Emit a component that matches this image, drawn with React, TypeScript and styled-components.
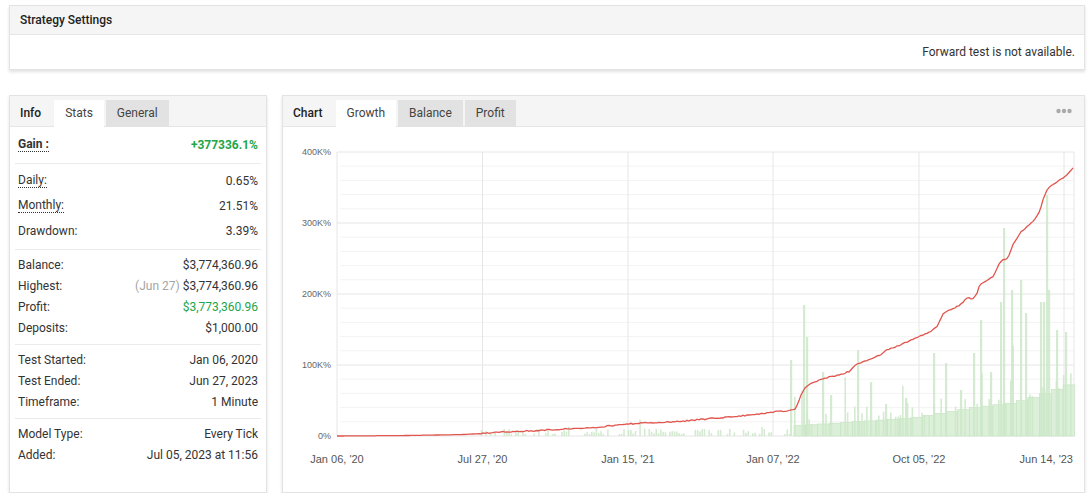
import React from 'react';
import styled, { createGlobalStyle } from 'styled-components';

const GlobalStyle = createGlobalStyle`
	* {
		box-sizing: border-box;
	}
	html,
	body {
		margin: 0;
		padding: 0;
		background: #fff;
	}
	body {
		font-family: Roboto, 'Liberation Sans', Arial, sans-serif;
		color: #333;
	}
`;

const Page = styled.div`
	width: 1090px;
	padding: 5px 5px 0 9px;
`;
const Panel = styled.section`
	display: flex;
	flex-direction: column;
	background: #fff;
	border: 1px solid #e3e3e3;
	box-shadow: 0 2px 3px rgba(0, 0, 0, 0.12);
`;
const SettingsPanel = styled(Panel)`
	height: 65px;
`;
const PanelHead = styled.div`
	display: flex;
	align-items: center;
	height: 29px;
	padding-left: 10px;
	background: #f5f5f5;
	border-bottom: 1px solid #e6e6e6;
	font-size: 12px;
	font-weight: 500;
	color: #222;
`;
const PanelNote = styled.div`
	flex: 1;
	display: flex;
	justify-content: flex-end;
	align-items: center;
	padding-right: 9px;
	font-size: 12px;
	color: #333;
`;
const Row = styled.div`
	display: flex;
	gap: 15px;
	margin-top: 25px;
`;
const StatsPanel = styled(Panel)`
	width: 258px;
	height: 398px;
`;
const ChartPanel = styled(Panel)`
	flex: 1;
	height: 398px;
`;
const TabBar = styled.div`
	display: flex;
	align-items: flex-end;
	height: 31px;
	background: #f5f5f5;
	border-bottom: 1px solid #e6e6e6;
	gap: 2px;
`;
const TabTitle = styled.div`
	height: 26px;
	line-height: 26px;
	padding: 0 11px 0 10px;
	font-size: 12px;
	font-weight: 500;
	color: #222;
`;
const Tab = styled.div<{ $active?: boolean }>`
	height: 27px;
	line-height: 26px;
	margin-bottom: -1px;
	padding: 0 11px;
	font-size: 12px;
	color: #444;
	background: ${(p) => (p.$active ? '#fff' : '#e2e2e2')};
`;
const MoreBtn = styled.button`
	align-self: center;
	display: flex;
	margin-left: auto;
	margin-right: 12px;
	padding: 0;
	border: none;
	background: transparent;
`;
const StatsBody = styled.div`
	padding: 0 5px;
`;
const Group = styled.div<{ $last?: boolean; $top?: number }>`
	padding: ${(p) => p.$top ?? 4}px 0 6px;
	border-bottom: ${(p) => (p.$last ? 'none' : '1px solid #ebebeb')};
`;
const StatRow = styled.div<{ $tall?: boolean }>`
	display: flex;
	justify-content: space-between;
	align-items: center;
	height: ${(p) => (p.$tall ? 25 : 21)}px;
	padding: 0 3px;
	font-size: 12px;
	color: #333;
`;
const Label = styled.span<{ $dotted?: boolean; $bold?: boolean }>`
	line-height: 14px;
	font-weight: ${(p) => (p.$bold ? 700 : 400)};
	border-bottom: ${(p) => (p.$dotted ? '1px dotted #333' : 'none')};
`;
const Value = styled.span<{ $green?: boolean; $bold?: boolean }>`
	color: ${(p) => (p.$green ? '#23a548' : '#333')};
	font-weight: ${(p) => (p.$bold ? 700 : 400)};
`;
const Muted = styled.span`
	color: #a5a5a5;
	margin-right: 3px;
`;
const ChartBody = styled.div`
	flex: 1;
	display: flex;
`;

// seeded random so the chart is stable
const mulberry = (seed: number) => () => {
	seed = (seed + 0x6d2b79f5) | 0;
	let t = Math.imul(seed ^ (seed >>> 15), 1 | seed);
	t = (t + Math.imul(t ^ (t >>> 7), 61 | t)) ^ t;
	return ((t ^ (t >>> 14)) >>> 0) / 4294967296;
};

const X0 = 337;
const X1 = 1074;
const Y0 = 152;
const Y1 = 436;

const lerp = (pts: number[][], x: number) => {
	for (let i = 1; i < pts.length; i++) {
		if (x <= pts[i][0]) {
			const [ax, ay] = pts[i - 1];
			const [bx, by] = pts[i];
			return ay + ((x - ax) / (bx - ax)) * (by - ay);
		}
	}
	return pts[pts.length - 1][1];
};

const growth = [
	[337, 436], [400, 435.6], [460, 434.6], [482, 433.6], [503, 432], [540, 430.5], [580, 428.2],
	[600, 427], [627, 424], [650, 422.5], [680, 421.5], [700, 419.5], [730, 417], [760, 414],
	[773, 412], [790, 410.5], [795, 409.5], [798, 404], [801, 395], [806, 387], [813, 382],
	[830, 377], [843, 374], [850, 371], [857, 364], [870, 359], [880, 355], [887, 350],
	[900, 345], [913, 339], [930, 332], [937, 326], [943, 314], [950, 310], [960, 305],
	[965, 300], [968, 297], [972, 299], [976, 296], [980, 284], [993, 277], [1000, 262],
	[1005, 259], [1008, 258], [1013, 244], [1020, 233], [1027, 227], [1033, 221], [1038, 215],
	[1041, 207], [1043, 200], [1048, 188], [1057, 182], [1065, 177], [1069, 173], [1073, 168],
];

const floorPts = [
	[793, 426], [913, 418], [973, 408], [1013, 403], [1040, 396], [1074, 383],
];

const spikes = [
	[790, 360], [803, 305], [806, 337], [822, 372], [830, 395], [857, 350], [870, 382],
	[885, 404], [905, 398], [933, 353], [945, 363], [960, 390], [973, 353], [980, 320],
	[990, 372], [1000, 302], [1003, 228], [1011, 290], [1020, 280], [1025, 313], [1040, 302],
	[1043, 302], [1046, 195], [1048, 290], [1056, 330], [1065, 332],
];

const buildLine = () => {
	const r = mulberry(3);
	const out: string[] = [];
	for (let x = X0; x <= 1073; x += 2) {
		const y = lerp(growth, x) + (x > 480 ? (r() - 0.5) * 1.2 : 0);
		out.push(`${x},${y.toFixed(1)}`);
	}
	return out.join(' ');
};

type Bar = { x: number; top: number; w: number; floor?: boolean };

const buildBars = () => {
	const r = mulberry(11);
	const bars: Bar[] = [];
	for (let x = 338; x < 793; x += 2.3) {
		const p = x < 480 ? 0.06 : 0.6;
		if (r() > p) continue;
		let h = x < 480 ? 1 : 1.5 + r() * 6;
		if (x > 480 && r() < 0.07) h = 8 + r() * 16;
		bars.push({ x, top: Y1 - h, w: 1.6 });
	}
	for (let x = 794; x < 1073; x += 11.7) {
		bars.push({ x, top: lerp(floorPts, x + 6), w: 11.7, floor: true });
	}
	for (let x = 794; x < 1072; x += 2.4) {
		if (r() > 0.35) continue;
		let h = r() * 16;
		if (r() < 0.08) h = 20 + r() * 40;
		bars.push({ x, top: lerp(floorPts, x) - h, w: 1.6 });
	}
	spikes.forEach(([x, top]) => bars.push({ x, top, w: 2.2 }));
	return bars;
};

const xLabels = [
	{ x: 337, t: "Jan 06, '20" },
	{ x: 482.5, t: "Jul 27, '20" },
	{ x: 628, t: "Jan 15, '21" },
	{ x: 773, t: "Jan 07, '22" },
	{ x: 919, t: "Oct 05, '22" },
];
const vLines = [337, 482.5, 628, 773, 919, 1064];
const yLabels = ['400K%', '300K%', '200K%', '100K%', '0%'];

const GrowthChart = () => {
	const bars = buildBars();
	const step = (Y1 - Y0) / 20;
	return (
		<svg width={801} height={365} viewBox="283 127 801 365" style={{ display: 'block' }}>
			{Array.from({ length: 21 }).map((_, i) => {
				const y = Y0 + i * step;
				const major = i % 5 === 0;
				return (
					<line
						key={i}
						x1={major ? X0 : X0 + 3}
						x2={X1}
						y1={y}
						y2={y}
						stroke={major ? '#e6e6e6' : '#f3f3f3'}
						strokeWidth={1}
					/>
				);
			})}
			{vLines.map((x) => (
				<line key={x} x1={x} x2={x} y1={Y0} y2={Y1} stroke="#e6e6e6" strokeWidth={1} />
			))}
			<line x1={X1} x2={X1} y1={Y0} y2={Y1} stroke="#e6e6e6" strokeWidth={1} />
			{bars.map((b, i) => (
				<rect
					key={i}
					x={b.x}
					y={b.top}
					width={b.w}
					height={Y1 - b.top}
					fill={b.floor ? '#dcefd9' : '#cde7c9'}
					stroke={b.floor ? '#c3e1bf' : 'none'}
					strokeWidth={0.6}
					opacity={b.floor ? 1 : 0.85}
				/>
			))}
			<polyline points={buildLine()} fill="none" stroke="#e0554d" strokeWidth={1.3} />
			{yLabels.map((t, i) => (
				<text
					key={t}
					x={331}
					y={Y0 + i * step * 5 + 3}
					textAnchor="end"
					fontSize={9}
					fontFamily="'Liberation Sans', Arial, sans-serif"
					fill="#666"
				>
					{t}
				</text>
			))}
			{xLabels.map((l) => (
				<text
					key={l.t}
					x={l.x}
					y={463}
					textAnchor="middle"
					fontSize={11}
					fontFamily="'Liberation Sans', Arial, sans-serif"
					fill="#555"
				>
					{l.t}
				</text>
			))}
			<text
				x={1073}
				y={463}
				textAnchor="end"
				fontSize={11}
				fontFamily="'Liberation Sans', Arial, sans-serif"
				fill="#555"
			>
				Jun 14, '23
			</text>
		</svg>
	);
};

const Dots = () => (
	<svg width={16} height={6} viewBox="0 0 16 6">
		<circle cx={2.5} cy={3} r={2.2} fill="#aaa" />
		<circle cx={8} cy={3} r={2.2} fill="#aaa" />
		<circle cx={13.5} cy={3} r={2.2} fill="#aaa" />
	</svg>
);

const App = () => {
	return (
		<Page>
			<GlobalStyle />
			<SettingsPanel>
				<PanelHead>Strategy Settings</PanelHead>
				<PanelNote>Forward test is not available.</PanelNote>
			</SettingsPanel>
			<Row>
				<StatsPanel>
					<TabBar>
						<TabTitle>Info</TabTitle>
						<Tab $active>Stats</Tab>
						<Tab>General</Tab>
					</TabBar>
					<StatsBody>
						<Group $top={5}>
							<StatRow $tall>
								<Label $dotted $bold>Gain :</Label>
								<Value $green $bold>+377336.1%</Value>
							</StatRow>
						</Group>
						<Group>
							<StatRow $tall>
								<Label $dotted>Daily:</Label>
								<Value>0.65%</Value>
							</StatRow>
							<StatRow $tall>
								<Label $dotted>Monthly:</Label>
								<Value>21.51%</Value>
							</StatRow>
							<StatRow $tall>
								<Label>Drawdown:</Label>
								<Value>3.39%</Value>
							</StatRow>
						</Group>
						<Group>
							<StatRow>
								<Label>Balance:</Label>
								<Value>$3,774,360.96</Value>
							</StatRow>
							<StatRow>
								<Label>Highest:</Label>
								<Value>
									<Muted>(Jun 27)</Muted>$3,774,360.96
								</Value>
							</StatRow>
							<StatRow>
								<Label>Profit:</Label>
								<Value $green>$3,773,360.96</Value>
							</StatRow>
							<StatRow>
								<Label>Deposits:</Label>
								<Value>$1,000.00</Value>
							</StatRow>
						</Group>
						<Group>
							<StatRow>
								<Label>Test Started:</Label>
								<Value>Jan 06, 2020</Value>
							</StatRow>
							<StatRow>
								<Label>Test Ended:</Label>
								<Value>Jun 27, 2023</Value>
							</StatRow>
							<StatRow>
								<Label>Timeframe:</Label>
								<Value>1 Minute</Value>
							</StatRow>
						</Group>
						<Group $last>
							<StatRow>
								<Label>Model Type:</Label>
								<Value>Every Tick</Value>
							</StatRow>
							<StatRow>
								<Label>Added:</Label>
								<Value>Jul 05, 2023 at 11:56</Value>
							</StatRow>
						</Group>
					</StatsBody>
				</StatsPanel>
				<ChartPanel>
					<TabBar>
						<TabTitle>Chart</TabTitle>
						<Tab $active>Growth</Tab>
						<Tab>Balance</Tab>
						<Tab>Profit</Tab>
						<MoreBtn aria-label="more">
							<Dots />
						</MoreBtn>
					</TabBar>
					<ChartBody>
						<GrowthChart />
					</ChartBody>
				</ChartPanel>
			</Row>
		</Page>
	);
};

export default App;
